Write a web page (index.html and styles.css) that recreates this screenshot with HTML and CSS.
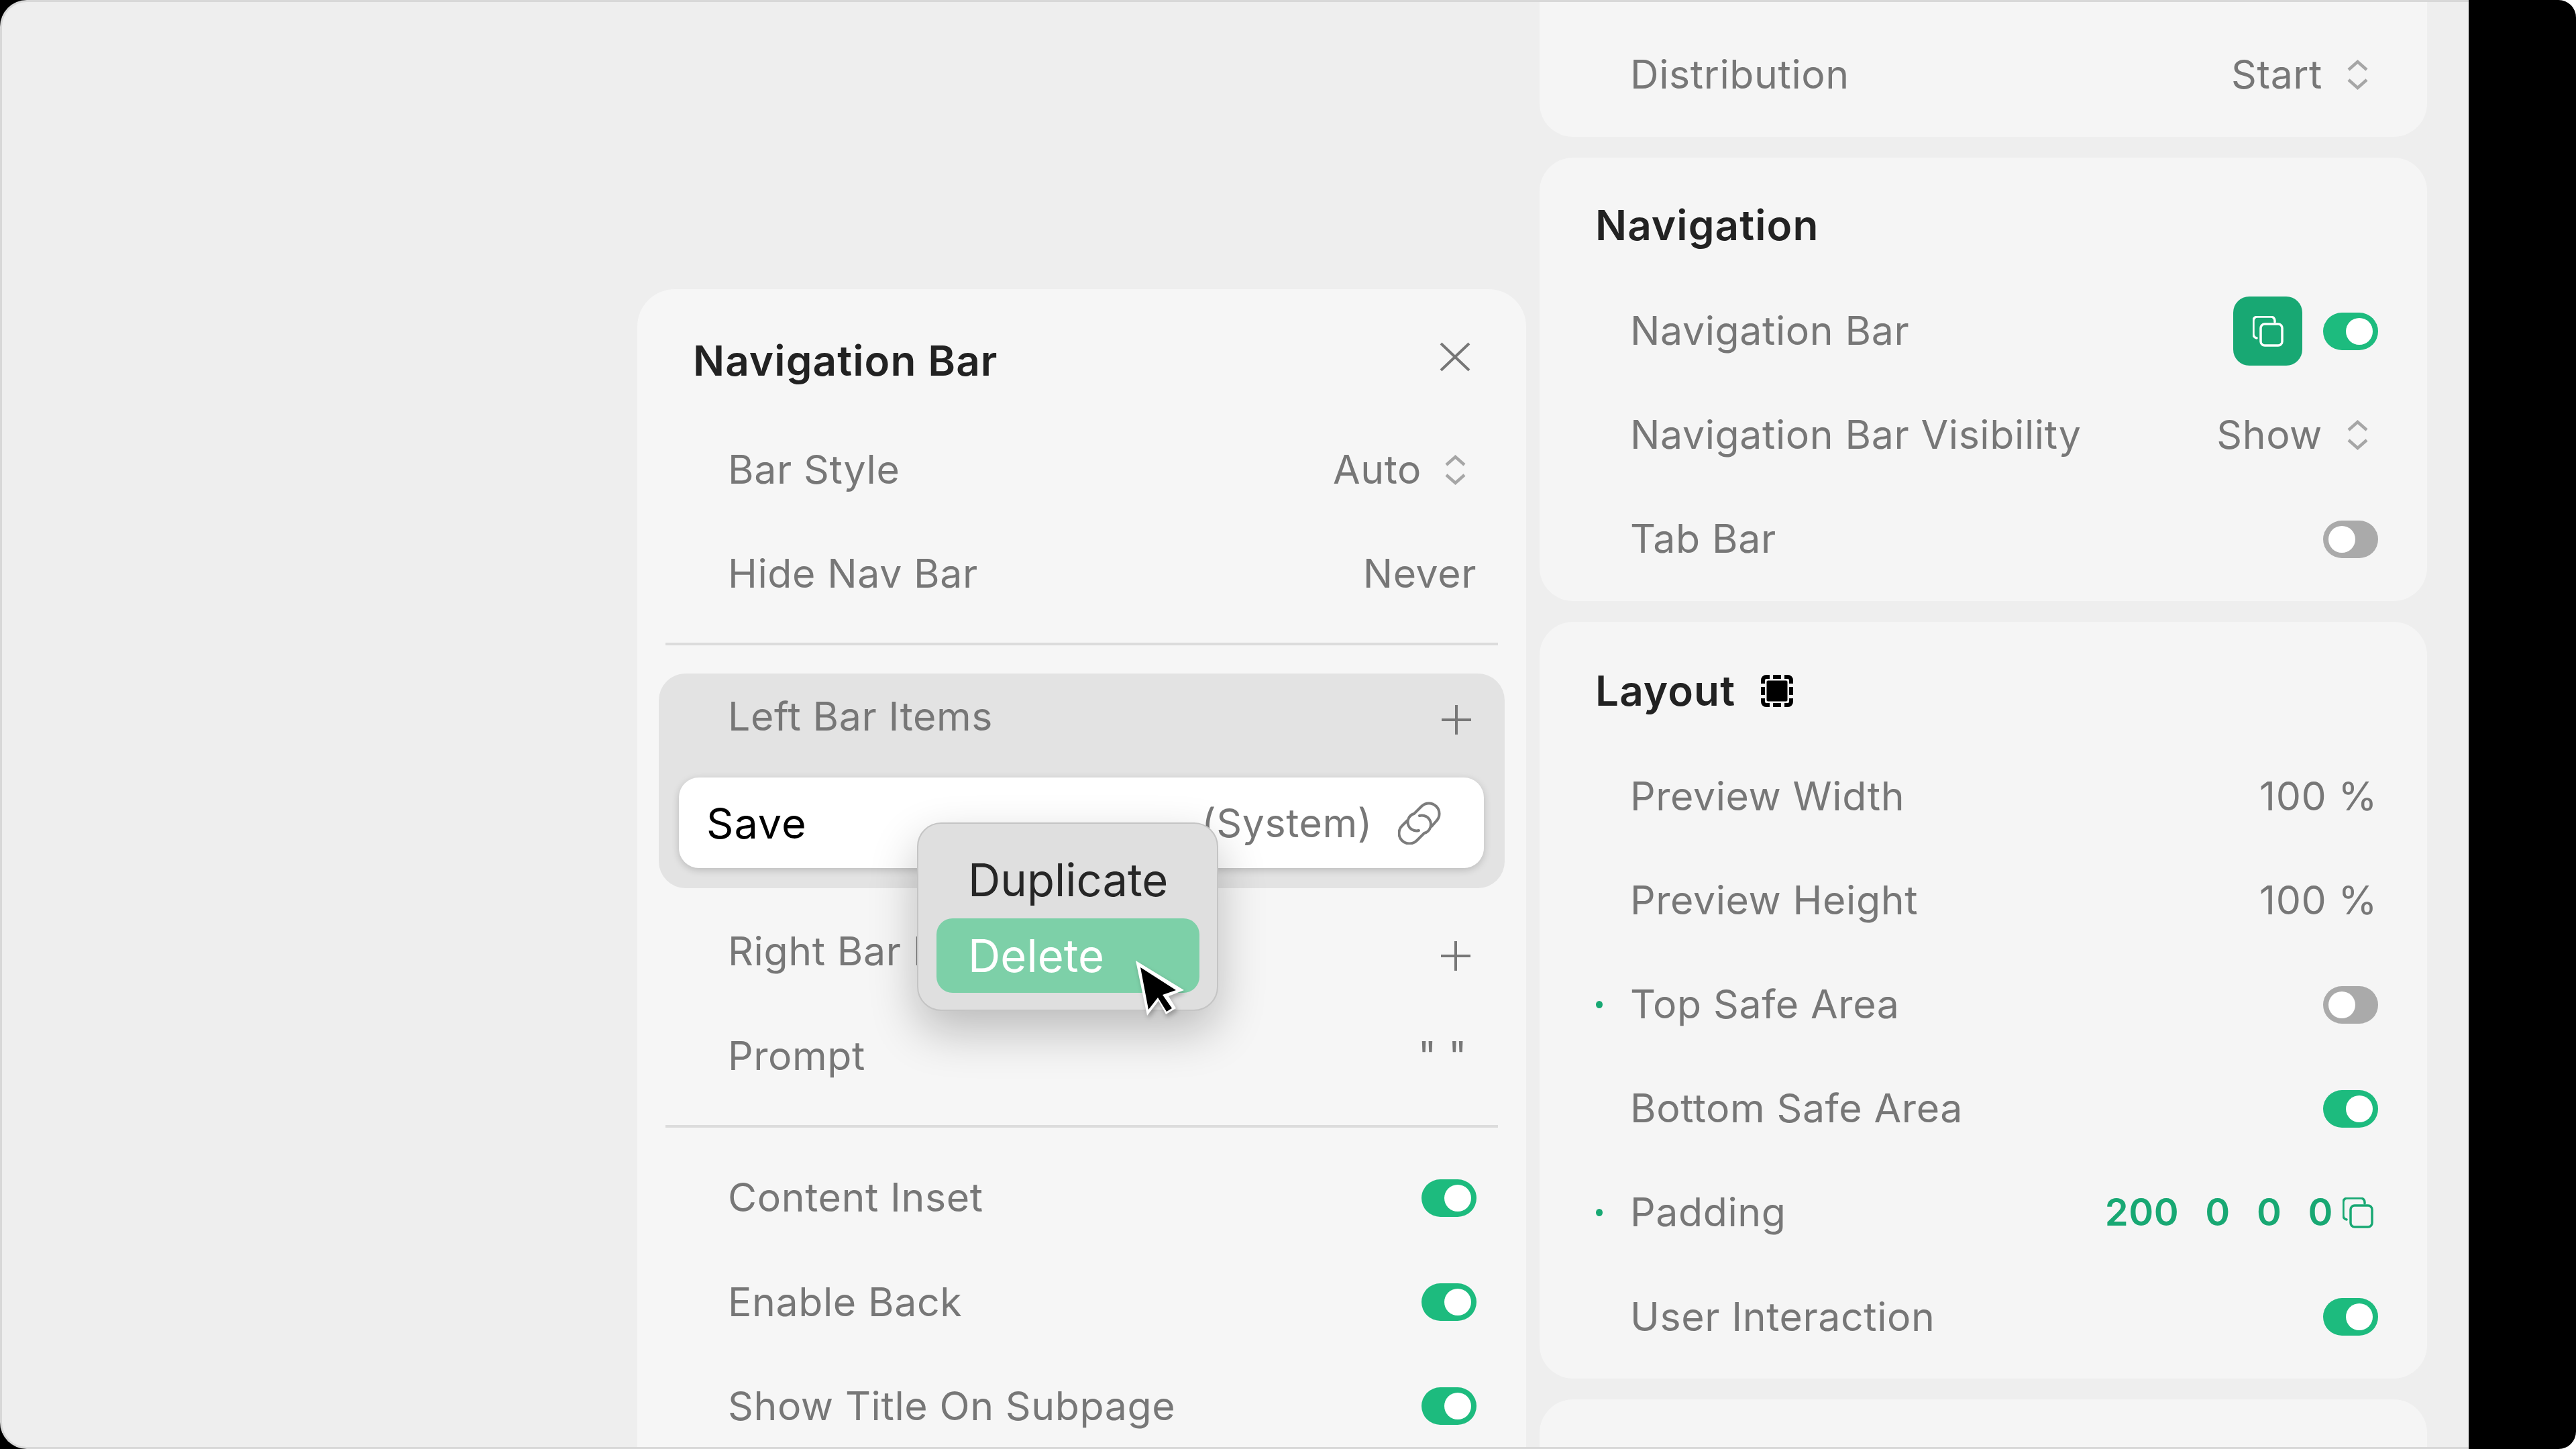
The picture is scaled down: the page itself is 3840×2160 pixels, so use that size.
FILE: index.html
```html
<!DOCTYPE html>
<html lang="en">
<head>
<meta charset="utf-8">
<title>Navigation Bar</title>
<link rel="stylesheet" href="styles.css">
</head>
<body>
<svg class="defs" width="0" height="0" aria-hidden="true">
  <symbol id="chev" viewBox="0 0 33 45"><path d="M3 15 16.500 3 30 15M3 30 16.500 42 30 30" fill="none" stroke="currentColor" stroke-width="4.500"/></symbol>
  <symbol id="plus" viewBox="0 0 46 46"><path d="M23 1V45M1 23H45" fill="none" stroke="currentColor" stroke-width="4"/></symbol>
  <symbol id="copy" viewBox="0 0 46 46"><path d="M33 9V7a6 6 0 0 0-6-6H7a6 6 0 0 0-6 6V27a6 6 0 0 0 5 6" fill="none" stroke="currentColor" stroke-width="3.500" stroke-linecap="round"/><rect x="12" y="12" width="32" height="32" rx="6" fill="none" stroke="currentColor" stroke-width="3.500"/></symbol>
</svg>
<div class="screen">
  <div class="window">
    <section class="panel">
      <header class="panel-head">
        <h2 class="title">Navigation Bar</h2>
        <svg class="close" viewBox="0 0 46 44"><path d="M2 2 44 42M44 2 2 42" fill="none" stroke="#777" stroke-width="4"/></svg>
      </header>
      <div class="row row-p"><span class="label">Bar Style</span><span class="value">Auto</span><svg class="chev chev-p"><use href="#chev"/></svg></div>
      <div class="row row-p"><span class="label">Hide Nav Bar</span><span class="value">Never</span></div>
      <hr class="sep sep-a">
      <div class="group">
        <div class="group-head"><span class="label">Left Bar Items</span><svg class="plus"><use href="#plus"/></svg></div>
        <div class="item">
          <span class="item-name">Save</span>
          <span class="item-kind">(System)</span>
          <svg class="link" viewBox="0 0 64 64"><path d="M50 37 57 29A15.500 15.500 0 0 0 35 7L24 18A12 12 0 0 0 31 43M14 28 6 36A15.500 15.500 0 0 0 28 58L39 47A12 12 0 0 0 32 21" fill="none" stroke="#7c7c7c" stroke-width="4" stroke-linecap="round"/></svg>
        </div>
      </div>
      <div class="row row-p"><span class="label">Right Bar Items</span><svg class="plus plus-low"><use href="#plus"/></svg></div>
      <div class="row row-p"><span class="label">Prompt</span><span class="value quotes">" "</span></div>
      <hr class="sep sep-b">
      <div class="row row-p"><span class="label">Content Inset</span><span class="toggle on"></span></div>
      <div class="row row-p"><span class="label">Enable Back</span><span class="toggle on"></span></div>
      <div class="row row-p"><span class="label">Show Title On Subpage</span><span class="toggle on"></span></div>
    </section>

    <div class="column">
      <section class="card card-top">
        <div class="row"><span class="label">Distribution</span><span class="value">Start</span><svg class="chev"><use href="#chev"/></svg></div>
      </section>
      <section class="card">
        <h3 class="heading">Navigation</h3>
        <div class="row"><span class="label">Navigation Bar</span><span class="copy-btn"><svg class="copy-svg"><use href="#copy"/></svg></span><span class="toggle on"></span></div>
        <div class="row"><span class="label">Navigation Bar Visibility</span><span class="value">Show</span><svg class="chev"><use href="#chev"/></svg></div>
        <div class="row"><span class="label">Tab Bar</span><span class="toggle"></span></div>
      </section>
      <section class="card">
        <h3 class="heading heading-b">Layout
          <svg class="layout-icon" viewBox="0 0 48 48"><path d="M3 13V8a5 5 0 0 1 5-5h5M18 3H30M35 3h5a5 5 0 0 1 5 5v5M45 18V30M45 35v5a5 5 0 0 1-5 5h-5M30 45H18M13 45H8a5 5 0 0 1-5-5v-5M3 30V18" fill="none" stroke="#000" stroke-width="6"/><rect x="8.500" y="8.500" width="31" height="31" rx="2" fill="#000"/></svg>
        </h3>
        <div class="row"><span class="label">Preview Width</span><span class="value pct">100 %</span></div>
        <div class="row"><span class="label">Preview Height</span><span class="value pct">100 %</span></div>
        <div class="row"><i class="dot"></i><span class="label">Top Safe Area</span><span class="toggle"></span></div>
        <div class="row"><span class="label">Bottom Safe Area</span><span class="toggle on"></span></div>
        <div class="row"><i class="dot"></i><span class="label">Padding</span>
          <span class="pad-values"><span>200</span><span>0</span><span>0</span><span>0</span></span>
          <svg class="pad-copy"><use href="#copy"/></svg>
        </div>
        <div class="row"><span class="label">User Interaction</span><span class="toggle on"></span></div>
      </section>
      <section class="card card-end"></section>
    </div>

    <div class="menu">
      <div class="menu-item">Duplicate</div>
      <div class="menu-item active">Delete</div>
    </div>
    <svg class="cursor" viewBox="0 0 80 90"><path d="M3 2 75 46 52 55 63 73 48 82 37 62 20 84Z" fill="#fff"/><path d="M10 12 63 46 43 53 57 73 49 78 36 57 22 75Z" fill="#000"/></svg>
  </div>
</div>
</body>
</html>
```
FILE: styles.css
```css
* { box-sizing: border-box; }
html, body { margin: 0; padding: 0; }
body { width: 3840px; height: 2160px; overflow: hidden; background: #fff; font-family: Inter, "Liberation Sans", sans-serif; }
.defs { position: absolute; }

.screen {
  width: 3840px; height: 2160px; background: #000;
  border-radius: 0 26px 26px 0; display: flex;
}
.window {
  position: relative; width: 3680px; height: 2160px; flex: none;
  background: #eeeeee; overflow: hidden;
  border: 3px solid #d8d8d8; border-right: 0;
  border-radius: 40px 0 0 40px;
  display: flex; align-items: flex-start;
  padding-left: 947px;
}

.panel {
  width: 1325px; height: 1800px; margin-top: 428px; flex: none;
  background: #f6f6f6; border-radius: 56px 56px 0 0;
}
.panel-head {
  height: 191.5px; padding: 79px 83px 0 83px;
  display: flex; justify-content: space-between; align-items: flex-start;
}
.title, .heading {
  margin: 0; font-size: 62px; line-height: 56px; font-weight: 600; color: #222; letter-spacing: 1.1px;
}
.close { width: 46px; height: 44px; margin-right: 0; flex: none; }

.row {
  position: relative; height: 155.2px; padding: 0 73px 0 135px;
  display: flex; align-items: center;
}
.row-p { padding-right: 74px; }
.label { font-size: 59px; font-weight: 400; color: #777; letter-spacing: 0.6px; white-space: nowrap; margin-right: auto; margin-bottom: 2px; }
.value { font-size: 59px; font-weight: 400; color: #777; letter-spacing: 0.6px; white-space: nowrap; margin-bottom: 2px; }
.pct { margin-right: 1px; }
.quotes { margin-right: 14px; }
.chev { width: 33px; height: 45px; margin: 0 14px 0 36px; color: #a6a6a6; flex: none; }
.chev-p { margin-right: 15px; margin-left: 34px; }
.plus { width: 46px; height: 46px; margin-right: 8px; color: #777; flex: none; }
.plus-low { margin-top: 12px; }

.sep { height: 4px; margin: 0 42px; border: 0; background: #dcdcdc; }
.sep-a { margin-top: 25.500px; margin-bottom: 42px; }
.sep-b { margin-top: 25.500px; margin-bottom: 27px; }

.group { margin: 0 32px 17px; height: 320px; background: #e3e3e3; border-radius: 40px; padding: 0 31px 0 30px; }
.group-head { height: 128px; margin-bottom: 27px; padding: 0 18px 0 73px; display: flex; align-items: center; }
.group-head .plus { margin: 10px 0 0; }
.item {
  height: 135px; background: #fff; border-radius: 30px; padding: 0 64px 0 41px;
  display: flex; align-items: center; box-shadow: 0 3px 12px rgba(0,0,0,.18);
}
.item-name { font-size: 63px; color: #000; letter-spacing: 1px; margin-right: auto; }
.item-kind { font-size: 59px; color: #777; letter-spacing: 0.6px; }
.link { width: 64px; height: 64px; margin-left: 38px; margin-right: 0; flex: none; }

.column { width: 1323px; margin-left: 20px; margin-top: -3px; flex: none; display: flex; flex-direction: column; gap: 31px; }
.card { background: #f5f5f5; border-radius: 50px; padding-bottom: 14px; }
.card-top { height: 204px; border-radius: 0 0 50px 50px; padding-top: 34px; }
.card-end { height: 200px; }
.heading { margin: 73px 0 52px 83px; height: 56px; }
.heading-b { display: flex; align-items: center; gap: 38px; margin-top: 75px; margin-bottom: 52px; }
.layout-icon { width: 48px; height: 48px; flex: none; }

.toggle { width: 82px; height: 56px; border-radius: 28px; background: #aaaaaa; position: relative; flex: none; }
.toggle::after { content: ""; position: absolute; top: 8px; left: 8px; width: 40px; height: 40px; border-radius: 50%; background: #fff; }
.toggle.on { background: #1dbb7e; }
.toggle.on::after { left: 34px; }

.copy-btn { width: 103px; height: 103px; border-radius: 24px; background: #18a873; color: #fff; display: flex; align-items: center; justify-content: center; margin-right: 31px; flex: none; }
.copy-svg { width: 46px; height: 46px; }
.dot { width: 10px; height: 11px; border-radius: 50%; background: #18a873; margin-left: -51px; margin-right: 41px; flex: none; }
.pad-values { display: flex; gap: 39px; font-size: 56px; font-weight: 600; color: #18a873; letter-spacing: 0.6px; margin-bottom: 2px; }
.pad-copy { width: 46px; height: 46px; margin-left: 14px; margin-right: 7px; color: #18a873; flex: none; }

.menu {
  position: absolute; left: 1364px; top: 1223px; width: 449px; height: 281px;
  background: #dfdfdf; border: 2px solid #c4c4c4; border-radius: 36px; padding: 28px 26px 0 27px;
  box-shadow: 0 30px 70px rgba(0,0,0,.24);
}
.menu-item { height: 111px; border-radius: 24px; padding-left: 47px; font-size: 67px; line-height: 111px; color: #262626; }
.menu-item.active { margin-top: 2px; background: #7dd0a8; color: #fff; }
.cursor { position: absolute; left: 1687px; top: 1427px; width: 80px; height: 90px; filter: drop-shadow(2px 4px 3px rgba(0,0,0,.25)); }
```
